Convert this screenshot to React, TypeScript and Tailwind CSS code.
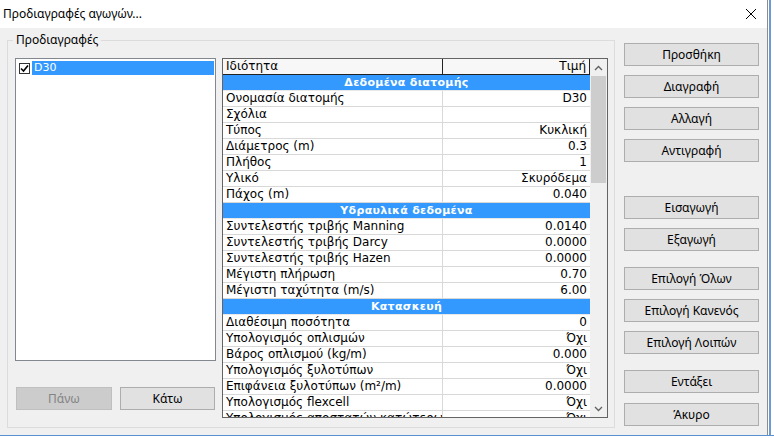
import React from 'react';

type Row = { kind: 'section'; title: string } | { kind: 'row'; label: string; value: string };

const rows: Row[] = [
    { kind: 'section', title: 'Δεδομένα διατομής' },
    { kind: 'row', label: 'Ονομασία διατομής', value: 'D30' },
    { kind: 'row', label: 'Σχόλια', value: '' },
    { kind: 'row', label: 'Τύπος', value: 'Κυκλική' },
    { kind: 'row', label: 'Διάμετρος (m)', value: '0.3' },
    { kind: 'row', label: 'Πλήθος', value: '1' },
    { kind: 'row', label: 'Υλικό', value: 'Σκυρόδεμα' },
    { kind: 'row', label: 'Πάχος (m)', value: '0.040' },
    { kind: 'section', title: 'Υδραυλικά δεδομένα' },
    { kind: 'row', label: 'Συντελεστής τριβής Manning', value: '0.0140' },
    { kind: 'row', label: 'Συντελεστής τριβής Darcy', value: '0.0000' },
    { kind: 'row', label: 'Συντελεστής τριβής Hazen', value: '0.0000' },
    { kind: 'row', label: 'Μέγιστη πλήρωση', value: '0.70' },
    { kind: 'row', label: 'Μέγιστη ταχύτητα (m/s)', value: '6.00' },
    { kind: 'section', title: 'Κατασκευή' },
    { kind: 'row', label: 'Διαθέσιμη ποσότητα', value: '0' },
    { kind: 'row', label: 'Υπολογισμός οπλισμών', value: 'Όχι' },
    { kind: 'row', label: 'Βάρος οπλισμού (kg/m)', value: '0.000' },
    { kind: 'row', label: 'Υπολογισμός ξυλοτύπων', value: 'Όχι' },
    { kind: 'row', label: 'Επιφάνεια ξυλοτύπων (m²/m)', value: '0.0000' },
    { kind: 'row', label: 'Υπολογισμός flexcell', value: 'Όχι' },
    { kind: 'row', label: 'Υπολογισμός αποστατών κατώτερων', value: 'Όχι' },
];

const sideButtons = [
    { label: 'Προσθήκη', mt: 'mt-0' },
    { label: 'Διαγραφή', mt: 'mt-[9px]' },
    { label: 'Αλλαγή', mt: 'mt-[9px]' },
    { label: 'Αντιγραφή', mt: 'mt-[9px]' },
    { label: 'Εισαγωγή', mt: 'mt-[34px]' },
    { label: 'Εξαγωγή', mt: 'mt-[9px]' },
    { label: 'Επιλογή Όλων', mt: 'mt-[16px]' },
    { label: 'Επιλογή Κανενός', mt: 'mt-[9px]' },
    { label: 'Επιλογή Λοιπών', mt: 'mt-[9px]' },
    { label: 'Εντάξει', mt: 'mt-[16px]' },
    { label: 'Άκυρο', mt: 'mt-[10px]' },
];

function WinButton({ label, className = '', disabled = false }: { label: string; className?: string; disabled?: boolean }) {
    return (
        <button
            className={`h-[23px] flex items-center justify-center border text-[12px] font-['Noto_Sans',sans-serif] ${disabled ? 'bg-[#cccccc] border-[#bfbfbf] text-[#838383]' : 'bg-[#e1e1e1] border-[#adadad] text-black'} ${className}`}
        >
            {label}
        </button>
    );
}

export default function App() {
    return (
        <div className="w-[774px] h-[438px] bg-white overflow-hidden flex flex-col">
            <div className="flex">
                {/* dialog window */}
                <div className="w-[768px] h-[435px] border-r border-[#8c8c8c] bg-[#f0f0f0] flex flex-col font-['Noto_Sans',sans-serif]">
                    {/* title bar */}
                    <div className="h-[28px] bg-white flex items-center justify-between pl-[3px] pr-[10px]">
                        <span className="text-[12px] text-black">Προδιαγραφές αγωγών...</span>
                        <svg width="12" height="12" viewBox="0 0 12 12" className="mt-[-1px]">
                            <path d="M1 1 L11 11 M11 1 L1 11" stroke="#000" strokeWidth="1" />
                        </svg>
                    </div>

                    <div className="flex pl-[7px]">
                        {/* group box */}
                        <div className="relative mt-[12px] w-[608px] h-[388px] border border-[#dcdcdc] flex pl-[7px] pt-[17px]">
                            <span className="absolute left-[5px] top-[-10px] px-[3px] bg-[#f0f0f0] text-[12px] text-black leading-[18px]">Προδιαγραφές</span>

                            {/* left list column */}
                            <div className="flex flex-col w-[201px]">
                                <div className="h-[303px] bg-white border border-[#828790] pt-[2px] pl-[3px]">
                                    <div className="flex items-center h-[14px]">
                                        <div className="w-[11px] h-[11px] border border-[#333] bg-white flex items-center justify-center">
                                            <svg width="9" height="9" viewBox="0 0 9 9">
                                                <path d="M1 4.5 L3.5 7 L8 1.5" fill="none" stroke="#000" strokeWidth="1.6" />
                                            </svg>
                                        </div>
                                        <div className="ml-[2px] flex-1 h-[14px] bg-[#3399ff] text-white text-[11px] leading-[14px] pl-[2px] font-['DejaVu_Sans',sans-serif]">D30</div>
                                        <div className="w-[1px]" />
                                    </div>
                                </div>
                                <div className="flex mt-[26px] pl-[1px]">
                                    <WinButton label="Πάνω" disabled className="w-[96px]" />
                                    <WinButton label="Κάτω" className="w-[95px] ml-[8px]" />
                                </div>
                            </div>

                            {/* property grid */}
                            <div className="ml-[6px] w-[386px] h-[360px] border border-[#646464] bg-white flex font-['DejaVu_Sans',sans-serif] text-[12px] text-black">
                                <div className="w-[367px] flex flex-col">
                                    <div className="flex h-[16px] bg-[#f7f7f7] border-b border-[#222] leading-[15px]">
                                        <div className="w-[220px] border-r border-[#222] pl-[3px]">Ιδιότητα</div>
                                        <div className="flex-1 border-r border-[#222] text-right pr-[3px]">Τιμή</div>
                                    </div>
                                    <div className="h-[342px] overflow-hidden">
                                        {rows.map((r, i) =>
                                            r.kind === 'section' ? (
                                                <div key={i} className="h-[16px] bg-[#3399ff] border-b border-[#e8e8e8] text-white font-bold text-[11px] text-center leading-[15px] tracking-[0.3px]">
                                                    {r.title}
                                                </div>
                                            ) : (
                                                <div key={i} className="flex h-[16px] border-b border-[#d8d8d8] leading-[15px]">
                                                    <div className="w-[220px] border-r border-[#d8d8d8] pl-[3px] whitespace-nowrap overflow-hidden">{r.label}</div>
                                                    <div className="flex-1 text-right pr-[3px] whitespace-nowrap">{r.value}</div>
                                                </div>
                                            )
                                        )}
                                    </div>
                                </div>

                                {/* scrollbar */}
                                <div className="w-[17px] bg-[#f0f0f0] flex flex-col items-center">
                                    <div className="h-[17px] flex items-center justify-center">
                                        <svg width="9" height="6" viewBox="0 0 9 6">
                                            <path d="M1 5 L4.5 1.5 L8 5" fill="none" stroke="#606060" strokeWidth="1.3" />
                                        </svg>
                                    </div>
                                    <div className="w-[15px] h-[107px] bg-[#cdcdcd]" />
                                    <div className="flex-1" />
                                    <div className="h-[17px] flex items-center justify-center">
                                        <svg width="9" height="6" viewBox="0 0 9 6">
                                            <path d="M1 1 L4.5 4.5 L8 1" fill="none" stroke="#606060" strokeWidth="1.3" />
                                        </svg>
                                    </div>
                                </div>
                            </div>
                        </div>

                        {/* right buttons */}
                        <div className="ml-[9px] mt-[15px] w-[135px] flex flex-col">
                            {sideButtons.map((b) => (
                                <WinButton key={b.label} label={b.label} className={`w-[135px] ${b.mt}`} />
                            ))}
                        </div>
                    </div>
                </div>
                <div className="flex-1 h-[435px] flex">
                    <div className="w-[1px]" />
                    <div className="w-[2px] bg-[#6b9bd2]" />
                </div>
            </div>
            <div className="h-[1px] bg-[#5a8fd0]" />
            <div className="flex-1 bg-white" />
        </div>
    );
}
